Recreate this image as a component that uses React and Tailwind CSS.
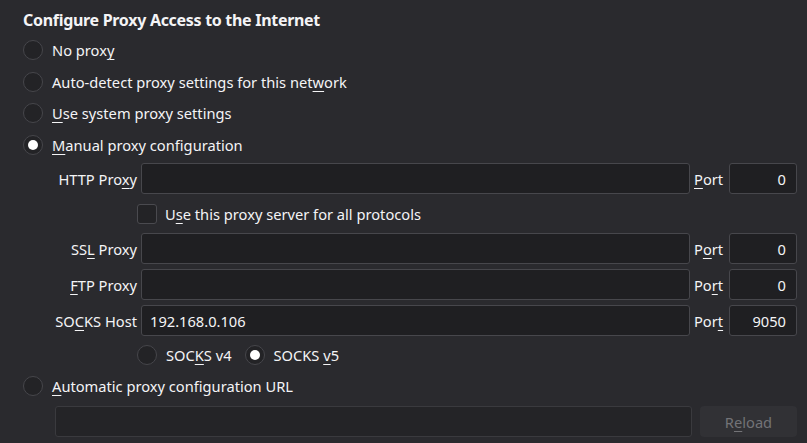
import React from "react";

const U = ({ children }) => (
  <span className="underline decoration-1 underline-offset-[3px]">{children}</span>
);

function Radio({ checked }) {
  return (
    <span className="w-5 h-5 rounded-full border border-[#46464b] bg-[#232326] flex items-center justify-center shrink-0">
      {checked && <span className="w-[10px] h-[10px] rounded-full bg-white" />}
    </span>
  );
}

function RadioRow({ h, checked, children }) {
  return (
    <div className={`flex items-center gap-[9px] ${h}`}>
      <Radio checked={checked} />
      <span>{children}</span>
    </div>
  );
}

function ProxyRow({ label, port, portLabel, value, className = "" }) {
  return (
    <div className={`flex items-center h-[31px] ${className}`}>
      <div className="w-[114px] text-right whitespace-nowrap">{label}</div>
      <div className="ml-[4px] w-[549px] h-[31px] rounded-[3px] border border-[#47474c] bg-[#1f1f22] flex items-center pl-[8px]">
        {value}
      </div>
      <div className="w-[39px] pl-[4px]">{portLabel}</div>
      <div className="w-[68px] h-[31px] rounded-[3px] border border-[#47474c] bg-[#1f1f22] flex items-center justify-end pr-[10px]">
        {port}
      </div>
    </div>
  );
}

export default function App() {
  return (
    <div
      className="w-[807px] h-[443px] bg-[#2a2a2e] text-[#f4f4f6] overflow-hidden pl-[23px] pr-[10px] text-[14.67px] leading-[20px]"
      style={{ fontFamily: '"Noto Sans", sans-serif' }}
    >
      <div className="h-[34px] pt-[8px] text-[16px] font-bold leading-[24px] tracking-[-0.3px]">
        Configure Proxy Access to the Internet
      </div>
      <RadioRow h="h-[32px]">
        No prox<U>y</U>
      </RadioRow>
      <RadioRow h="h-[31px]">
        Auto-detect proxy settings for this net<U>w</U>ork
      </RadioRow>
      <RadioRow h="h-[32px]">
        <U>U</U>se system proxy settings
      </RadioRow>
      <RadioRow h="h-[32px]" checked>
        <U>M</U>anual proxy configuration
      </RadioRow>

      <ProxyRow
        className="mt-[2px]"
        label={<>HTTP Pro<U>x</U>y</>}
        portLabel={<><U>P</U>ort</>}
        port="0"
      />
      <div className="h-[39px] flex items-center pl-[114px] gap-[8px]">
        <span className="w-5 h-5 rounded-[3px] border border-[#4a4a4f] bg-[#232326] shrink-0" />
        <span>
          U<U>s</U>e this proxy server for all protocols
        </span>
      </div>
      <ProxyRow
        label={<>SS<U>L</U> Proxy</>}
        portLabel={<>P<U>o</U>rt</>}
        port="0"
      />
      <ProxyRow
        className="mt-[5px]"
        label={<><U>F</U>TP Proxy</>}
        portLabel={<>Po<U>r</U>t</>}
        port="0"
      />
      <ProxyRow
        className="mt-[5px]"
        label={<>SO<U>C</U>KS Host</>}
        portLabel={<>Por<U>t</U></>}
        port="9050"
        value="192.168.0.106"
      />
      <div className="h-[38px] flex items-center pl-[114px]">
        <div className="flex items-center gap-[9px]">
          <Radio />
          <span>
            SOC<U>K</U>S v4
          </span>
        </div>
        <div className="flex items-center gap-[9px] ml-[13px]">
          <Radio checked />
          <span>
            SOCKS <U>v</U>5
          </span>
        </div>
      </div>
      <RadioRow h="h-[24px]">
        <U>A</U>utomatic proxy configuration URL
      </RadioRow>
      <div className="mt-[8px] flex items-center pl-[32px] gap-[8px]">
        <div className="w-[637px] h-[31px] rounded-[3px] border border-[#3a3a3e] bg-[#242427]" />
        <div className="w-[97px] h-[31px] rounded-[4px] bg-[#313135] text-[#737377] flex items-center justify-center">
          R<U>e</U>load
        </div>
      </div>
    </div>
  );
}
